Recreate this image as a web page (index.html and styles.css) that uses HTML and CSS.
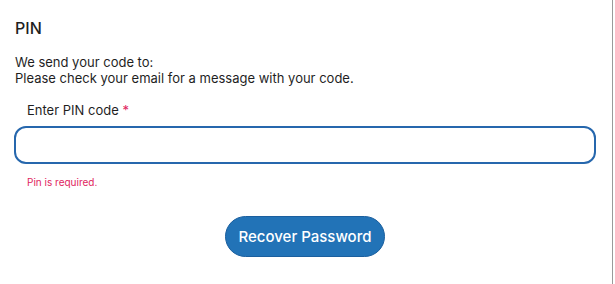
FILE: index.html
```html
<!DOCTYPE html>
<html lang="en">
<head>
    <meta charset="UTF-8">
    <meta name="viewport" content="width=device-width, initial-scale=1.0">
    <title>PIN</title>
    <link rel="stylesheet" href="styles.css">
</head>
<body>
    <div class="card">
        <h2>PIN</h2>
        <p class="info">We send your code to:<br>Please check your email for a message with your code.</p>
        <div class="field">
            <label for="pin">Enter PIN code <span class="req">*</span></label>
            <input type="text" id="pin">
            <div class="error">Pin is required.</div>
        </div>
        <div class="actions">
            <button>Recover Password</button>
        </div>
    </div>
</body>
</html>
```

FILE: styles.css
```css
body {
    font-family: Inter, "Noto Sans", sans-serif;
    background-color: #fff;
    color: #1f1f1f;
    margin: 0;
}
.card {
    width: 613px;
    height: 284px;
    box-sizing: border-box;
    border-right: 1px solid #9a9a9a;
    padding: 18px 16px 0 14px;
}
h2 {
    margin: 0 0 0 1px;
    font-size: 16px;
    font-weight: 500;
    line-height: 20px;
}
.info {
    margin: 16px 0 0 1px;
    font-size: 13px;
    line-height: 16px;
}
.field {
    margin-top: 16px;
}
label {
    display: block;
    margin-left: 13px;
    font-size: 13px;
    line-height: 16px;
}
.req {
    color: #e0245e;
}
input {
    display: block;
    width: 100%;
    box-sizing: border-box;
    height: 38px;
    margin-top: 8px;
    border: 2px solid #2667ad;
    border-radius: 12px;
    outline: none;
    font: inherit;
}
.error {
    margin: 12px 0 0 13px;
    font-size: 10px;
    line-height: 13px;
    color: #e0245e;
}
.actions {
    display: flex;
    justify-content: center;
    margin-top: 27px;
}
button {
    height: 41px;
    padding: 0 13px;
    border: 1px solid #1b5f9e;
    border-radius: 21px;
    background-color: #2273b7;
    color: #fff;
    font: inherit;
    font-size: 15px;
    font-weight: 500;
    cursor: pointer;
}
```
